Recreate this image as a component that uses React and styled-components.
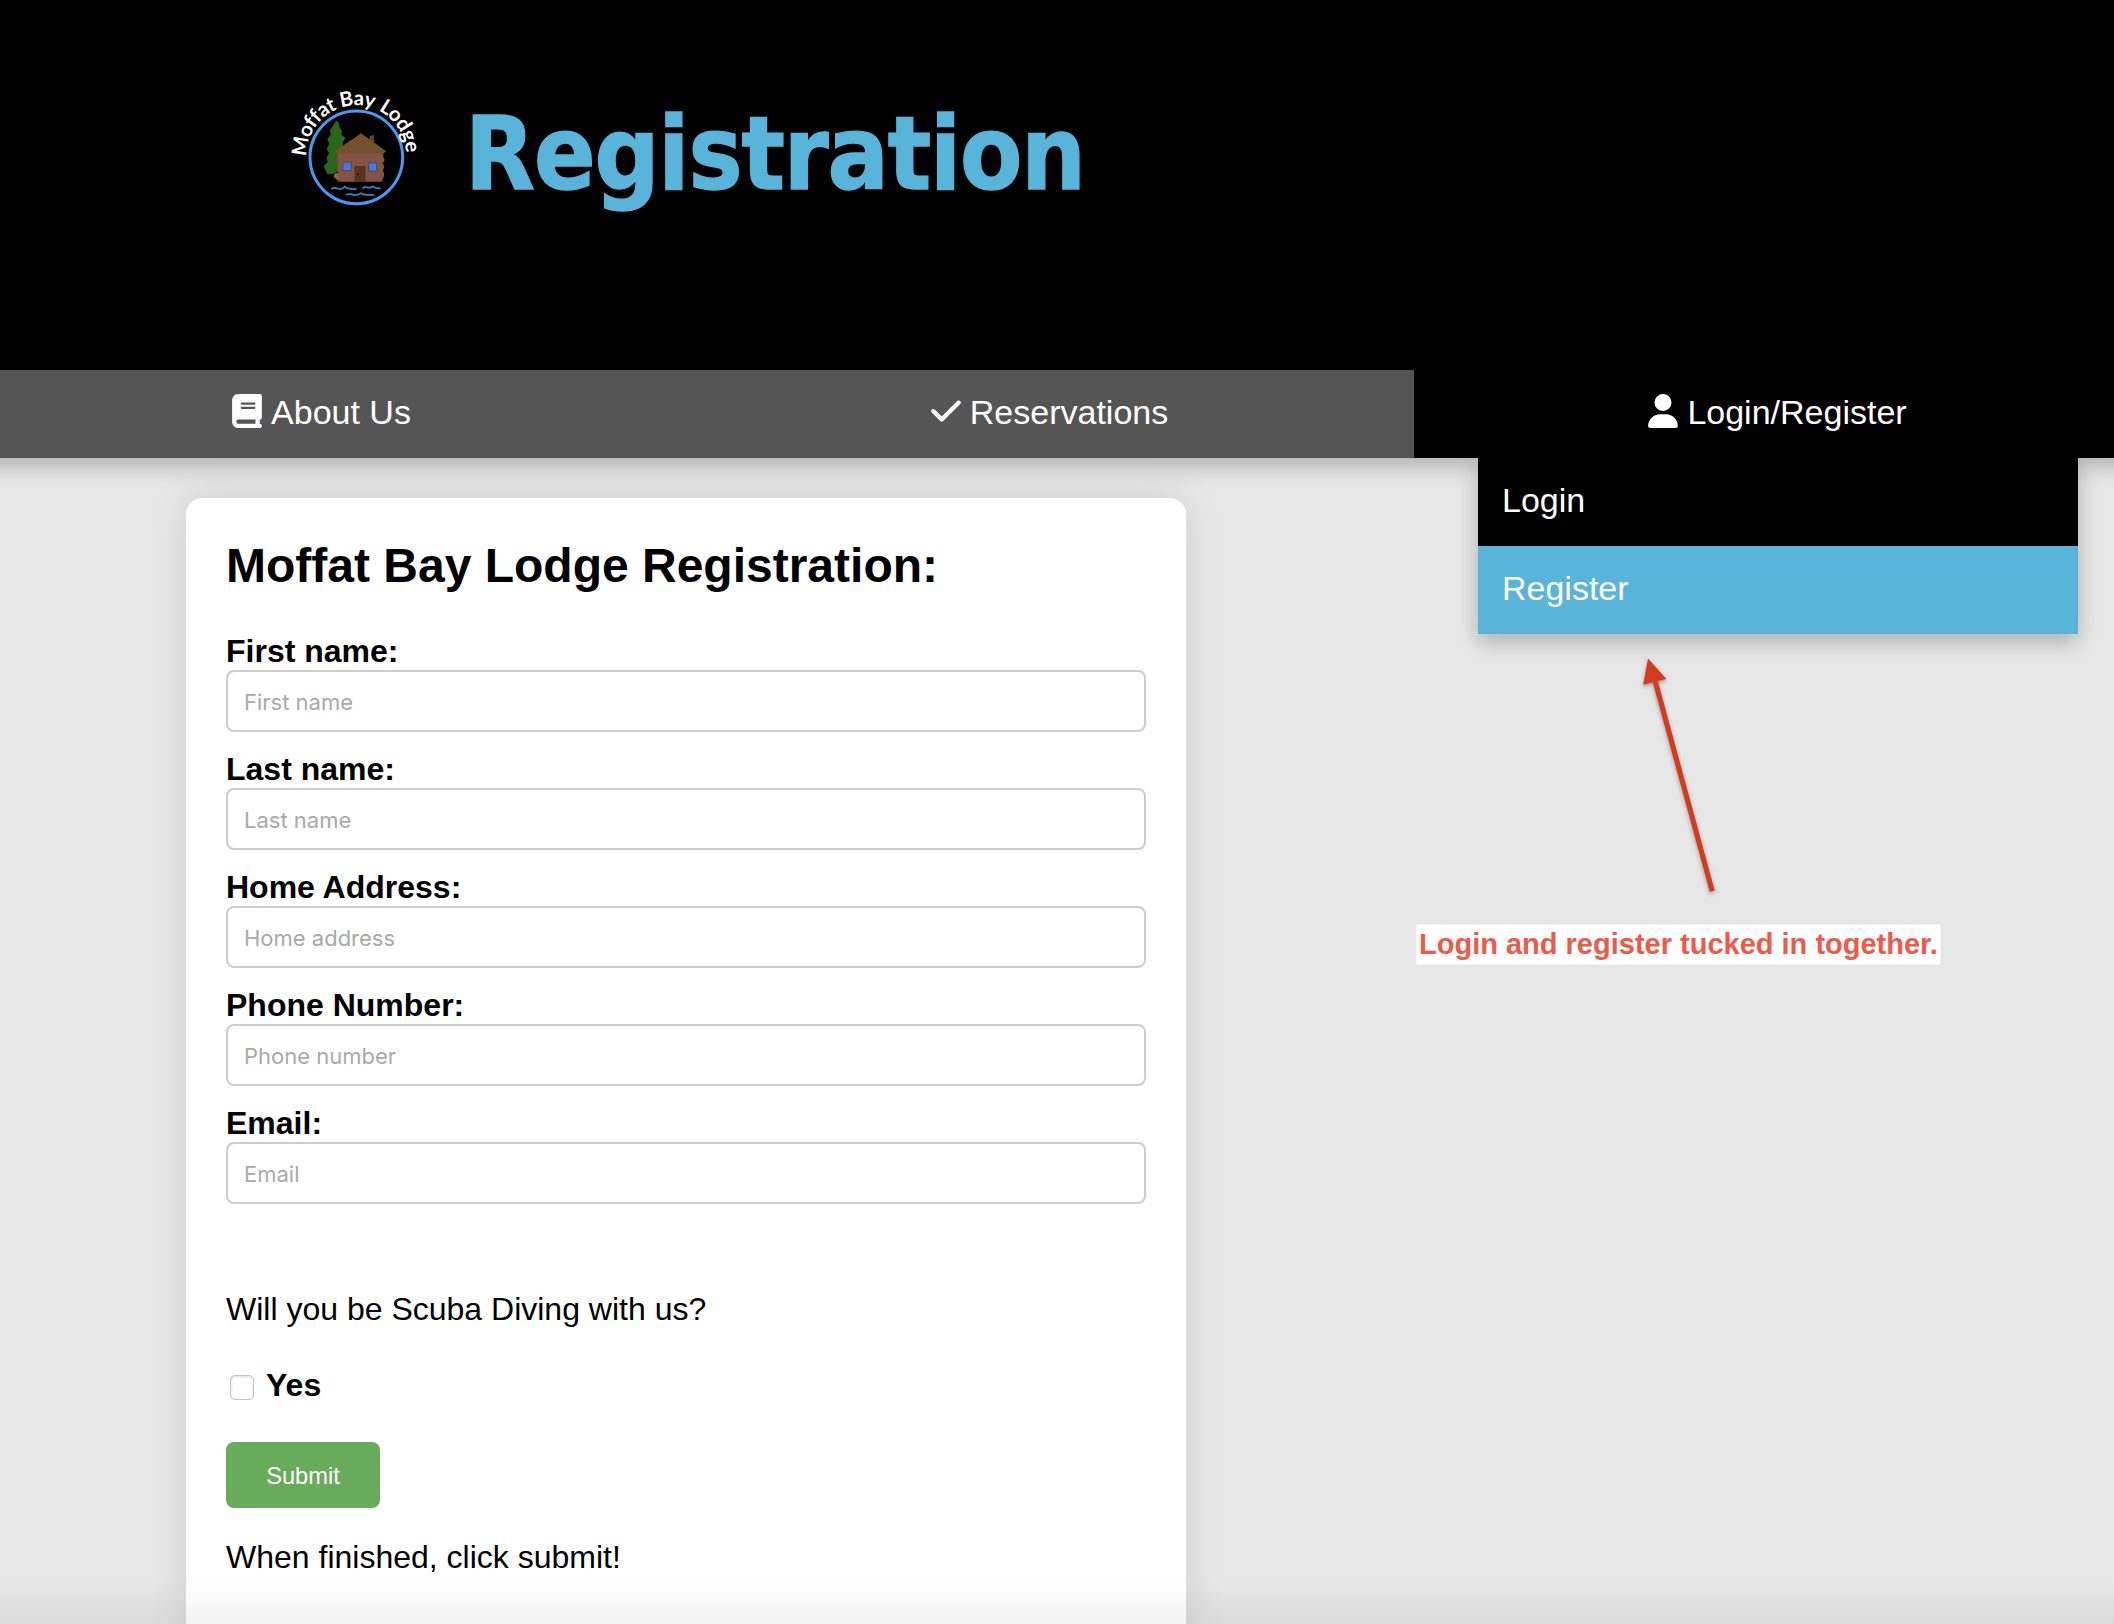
import React from "react";
import styled, { createGlobalStyle } from "styled-components";
import { FaBook, FaCheck, FaUser } from "react-icons/fa6";

const GlobalStyle = createGlobalStyle`
  *, *::before, *::after { box-sizing: border-box; }
  html, body { margin: 0; height: 100%; overflow: hidden; }
  body {
    background: #e7e7e7;
    color: #000;
    font-family: "Liberation Sans", Arial, sans-serif;
    font-size: 32px;
    line-height: 36px;
  }
`;

const Page = styled.div`
  position: relative;
  height: 1624px;
  overflow: hidden;
`;

const Header = styled.header`
  display: flex;
  align-items: flex-start;
  gap: 25px;
  height: 370px;
  padding: 70px 0 0 270px;
  background: #000;
`;

const Logo = styled.svg`
  width: 170px;
  height: 150px;
  flex: none;
`;

const Title = styled.h1`
  margin: 24px 0 0;
  color: #58b4d8;
  font-family: "DejaVu Sans Condensed", "DejaVu Sans", sans-serif;
  font-stretch: condensed;
  font-size: 101px;
  font-weight: 700;
  line-height: 120px;
  letter-spacing: -1.1px;
  -webkit-text-stroke: 1.4px #58b4d8;
`;

const Nav = styled.nav`
  position: relative;
  z-index: 2;
  display: grid;
  grid-template-columns: repeat(3, 728px);
  width: 2184px;
  margin-left: -42px;
  height: 88px;
  background: #555;
  box-shadow: 0 8px 20px rgba(0, 0, 0, 0.24);
`;

const NavItem = styled.div`
  position: relative;
  background: ${(p) => (p.$active ? "#000" : "transparent")};
`;

const NavLink = styled.a`
  display: flex;
  justify-content: center;
  gap: 7px;
  height: 88px;
  padding: 23px 3px 0 0;
  color: #fff;
  font-size: 34px;
  line-height: 39px;

  svg { margin-top: 1px; }
`;

const Menu = styled.div`
  position: absolute;
  top: 88px;
  left: 64px;
  width: 600px;
  background: #000;
  box-shadow: 0 8px 20px rgba(0, 0, 0, 0.24);
`;

const MenuLink = styled.a`
  display: block;
  height: 88px;
  padding: 23px 24px 0;
  background: ${(p) => (p.$selected ? "#58b4d8" : "#000")};
  color: #fff;
  font-size: 34px;
  line-height: 39px;
`;

const Card = styled.form`
  width: 1000px;
  height: 1300px;
  margin: 40px 0 0 186px;
  padding: 40px;
  border-radius: 16px;
  background: #fff;
  box-shadow: 0 0 40px rgba(0, 0, 0, 0.1);
`;

const CardTitle = styled.h2`
  margin: 0 0 39px;
  font-size: 48px;
  line-height: 55px;
`;

const Field = styled.div`
  display: flex;
  flex-direction: column;
  height: 118px;
`;

const Label = styled.label`
  display: block;
  height: 38px;
  padding-top: 1px;
  font-weight: 700;
`;

const Input = styled.input`
  width: 100%;
  height: 62px;
  padding: 2px 16px 0;
  border: 2px solid #ccc;
  border-radius: 8px;
  background: #fff;
  font-family: Inter, sans-serif;
  font-size: 22px;
  outline: none;

  &::placeholder { color: #a9a9a9; opacity: 1; }
`;

const Text = styled.p`
  margin: ${(p) => p.$top}px 0 0;
`;

const CheckRow = styled.label`
  display: flex;
  align-items: center;
  gap: 12px;
  margin-top: 40px;
  padding-left: 4px;
  font-weight: 700;
`;

const Checkbox = styled.input`
  appearance: none;
  width: 24px;
  height: 25px;
  margin: 5px 0 0;
  border: 1px solid #c3c3c3;
  border-radius: 5px;
  background: #fff;
  box-shadow: inset 0 1px 3px rgba(0, 0, 0, 0.14);
`;

const Submit = styled.button`
  display: block;
  width: 154px;
  height: 66px;
  margin-top: 39px;
  padding: 2px 0 0;
  border: 0;
  border-radius: 8px;
  background: #67ab5b;
  color: #fff;
  font-family: "Liberation Sans", Arial, sans-serif;
  font-size: 23.7px;
`;

const Arrow = styled.svg`
  position: absolute;
  z-index: 3;
  left: 1630px;
  top: 650px;
  width: 100px;
  height: 260px;
  filter: drop-shadow(0 2px 2px rgba(0, 0, 0, 0.35));
`;

const Note = styled.div`
  position: absolute;
  left: 1416px;
  top: 924px;
  width: 525px;
  height: 41px;
  padding-left: 2px;
  border: 1px solid #f3f3f3;
  background: #fff;
  color: #ed5a4a;
  font-size: 29px;
  font-weight: 700;
  line-height: 39px;
  white-space: nowrap;
`;

const BottomShade = styled.div`
  position: absolute;
  left: 0;
  right: 0;
  bottom: 0;
  height: 44px;
  background: linear-gradient(rgba(0, 0, 0, 0), rgba(0, 0, 0, 0.05));
`;

const FIELDS = [
  ["First name:", "First name"],
  ["Last name:", "Last name"],
  ["Home Address:", "Home address"],
  ["Phone Number:", "Phone number"],
  ["Email:", "Email"],
];

function LodgeLogo() {
  return (
    <Logo viewBox="0 0 510 450">
      <defs>
        <path id="logo-arc" d="M110.5 246 A149 149 0 1 1 407.5 246" />
      </defs>
      <circle cx="259" cy="262" r="139" fill="#000" stroke="#4a98f0" strokeWidth="9" />
      <path
        d="M198 153 Q207 153 208 170 L216 183 L214 193 L226 205 L218 218 L222 240 L215 300 L186 313 L172 312 L161 288 L173 276 L170 262 L177 250 L170 236 L178 222 L172 207 L182 194 L180 180 L189 168 Z"
        fill="#2d661b"
        transform="translate(0 0)"
      />
      <path d="M299 198 L312 195 L312 225 L299 218 Z" fill="#65422b" />
      <path d="M203 245 H340 V262 L344 270 L339 280 L343 290 L339 302 L343 312 L340 325 L335 335 H207 L190 320 L196 309 H203 Z" fill="#835443" />
      <path d="M190 315 L201 309 L210 329 L200 327 Z" fill="#8e6745" />
      <path d="M273 190 L349 244 L337 251 H203 L195 243 Z" fill="#74502e" />
      <g fill="#3b7cf4" stroke="#55372b" strokeWidth="2">
        <path d="M219 277 H243 V302 H219 Z" />
        <path d="M296 279 H320 V303 H296 Z" />
      </g>
      <path d="M255 290 H285 V333 H255 Z" fill="#583719" stroke="#46280f" strokeWidth="2" />
      <circle cx="263" cy="313" r="3" fill="#111" />
      <g fill="none" stroke="#3d86cf" strokeWidth="5">
        <path d="M184 357 Q193 351 204 356 Q216 360 224 350 Q235 359 260 357" />
        <path d="M277 355 Q287 349 295 353 Q303 354 308 349 Q317 356 332 355" />
        <path d="M228 374 Q243 370 251 375 Q264 376 271 370 Q287 377 313 375" />
      </g>
      <text
        fill="#fff"
        fontFamily="Lato, sans-serif"
        fontSize="61"
        fontWeight="700"
        letterSpacing="-1.5"
        transform="translate(0 21)"
      >
        <textPath href="#logo-arc" startOffset="7">
          Moffat <tspan letterSpacing="-1">Bay</tspan> <tspan dx="3" letterSpacing="-1">Lodge</tspan>
        </textPath>
      </text>
    </Logo>
  );
}

export default function App() {
  return (
    <Page>
      <GlobalStyle />
      <Header>
        <LodgeLogo />
        <Title>Registration</Title>
      </Header>
      <Nav>
        <NavItem>
          <NavLink><FaBook size={34} width={30} />About Us</NavLink>
        </NavItem>
        <NavItem>
          <NavLink><FaCheck size={34} />Reservations</NavLink>
        </NavItem>
        <NavItem $active>
          <NavLink><FaUser size={34} />Login/Register</NavLink>
          <Menu>
            <MenuLink>Login</MenuLink>
            <MenuLink $selected>Register</MenuLink>
          </Menu>
        </NavItem>
      </Nav>
      <Card>
        <CardTitle>Moffat Bay Lodge Registration:</CardTitle>
        {FIELDS.map(([label, placeholder]) => (
          <Field key={label}>
            <Label>{label}</Label>
            <Input placeholder={placeholder} />
          </Field>
        ))}
        <Text $top={69}>Will you be Scuba Diving with us?</Text>
        <CheckRow>
          <Checkbox type="checkbox" />
          Yes
        </CheckRow>
        <Submit type="button">Submit</Submit>
        <Text $top={31}>When finished, click submit!</Text>
      </Card>
      <Arrow viewBox="0 0 100 260" fill="#d33b21">
        <path d="M18 8.5 L36.5 29 L27.8 31 L84.7 240.4 L79.8 241.7 L22.8 32.3 L13.2 34.8 Z" />
      </Arrow>
      <Note>Login and register tucked in together.</Note>
      <BottomShade />
    </Page>
  );
}
